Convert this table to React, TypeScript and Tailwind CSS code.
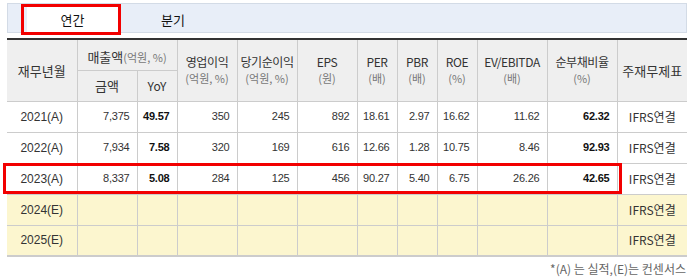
import React from "react";

const KR = "font-['Noto_Sans_CJK_KR','Noto_Sans',sans-serif]";
const NUM = "font-['Liberation_Sans','Noto_Sans_CJK_KR',sans-serif]";

type Row = {
  y: string;
  vals: string[];
  est?: boolean;
};

const rows: Row[] = [
  { y: "2021(A)", vals: ["7,375", "49.57", "350", "245", "892", "18.61", "2.97", "16.62", "11.62", "62.32"] },
  { y: "2022(A)", vals: ["7,934", "7.58", "320", "169", "616", "12.66", "1.28", "10.75", "8.46", "92.93"] },
  { y: "2023(A)", vals: ["8,337", "5.08", "284", "125", "456", "90.27", "5.40", "6.75", "26.26", "42.65"] },
  { y: "2024(E)", vals: ["", "", "", "", "", "", "", "", "", ""], est: true },
  { y: "2025(E)", vals: ["", "", "", "", "", "", "", "", "", ""], est: true },
];

const boldIdx = new Set([1, 9]);

function H2({ a, b }: { a: string; b: string }) {
  return (
    <div className="flex flex-col items-center whitespace-nowrap">
      <span className="block text-[12px] leading-[16px] tracking-[-0.4px] text-[#333]">{a}</span>
      <span className="block text-[11px] leading-[16px] text-[#777]">{b}</span>
    </div>
  );
}

export default function App() {
  const th = "border border-[#cccccc] bg-[#efefef] font-normal text-[#333] p-0 text-center align-middle whitespace-nowrap";
  return (
    <div className={`relative w-[688px] h-[280px] bg-white ${KR}`}>
      {/* tabs */}
      <div className="pt-[3px] pl-[7px]">
        <div className="w-[680px] h-[30px] bg-[#e8eef8] border border-[#d3dbe6] flex pl-[19px] pt-[3px]">
          <div className="w-[91px] h-[26px] bg-white flex items-center justify-center text-[13px] text-[#111]">연간</div>
          <div className="w-[110px] h-[26px] flex items-center justify-center text-[13px] text-[#111]">분기</div>
        </div>
      </div>

      {/* table */}
      <div className="pl-[7px] pt-[5px]">
        <table className="w-[680px] border-collapse table-fixed border-t-2 border-t-[#333] border-b-2 border-b-[#cccccc]">
          <colgroup>
            <col className="w-[70px]" />
            <col className="w-[60px]" />
            <col className="w-[40px]" />
            <col className="w-[60px]" />
            <col className="w-[60px]" />
            <col className="w-[60px]" />
            <col className="w-[40px]" />
            <col className="w-[40px]" />
            <col className="w-[40px]" />
            <col className="w-[70px]" />
            <col className="w-[70px]" />
            <col className="w-[70px]" />
          </colgroup>
          <thead>
            <tr className="h-[31px]">
              <th rowSpan={2} className={`${th} border-l-0 text-[13px]`}>재무년월</th>
              <th colSpan={2} className={th}>
                <span className="text-[13px]">매출액</span>
                <span className="text-[11px] text-[#777]">(억원, %)</span>
              </th>
              <th rowSpan={2} className={th}><H2 a="영업이익" b="(억원, %)" /></th>
              <th rowSpan={2} className={th}><H2 a="당기순이익" b="(억원, %)" /></th>
              <th rowSpan={2} className={th}><H2 a="EPS" b="(원)" /></th>
              <th rowSpan={2} className={th}><H2 a="PER" b="(배)" /></th>
              <th rowSpan={2} className={th}><H2 a="PBR" b="(배)" /></th>
              <th rowSpan={2} className={th}><H2 a="ROE" b="(%)" /></th>
              <th rowSpan={2} className={th}><H2 a="EV/EBITDA" b="(배)" /></th>
              <th rowSpan={2} className={th}><H2 a="순부채비율" b="(%)" /></th>
              <th rowSpan={2} className={`${th} border-r-0 text-[13px]`}>주재무제표</th>
            </tr>
            <tr className="h-[31px]">
              <th className={`${th} text-[13px]`}>금액</th>
              <th className={`${th} text-[12px]`}>YoY</th>
            </tr>
          </thead>
          <tbody>
            {rows.map((r) => (
              <tr key={r.y} className={`h-[31px] ${r.est ? "bg-[#fcf6cf]" : "bg-white"}`}>
                <td className={`border border-[#cccccc] border-l-0 text-center text-[12px] text-[#333] ${NUM}`}>{r.y}</td>
                {r.vals.map((v, i) => (
                  <td
                    key={i}
                    className={`border border-[#cccccc] text-right pr-[7px] text-[11px] tracking-[-0.2px] ${NUM} ${boldIdx.has(i) ? "font-bold text-[#111]" : "text-[#333]"}`}
                  >
                    {v}
                  </td>
                ))}
                <td className="border border-[#cccccc] border-r-0 text-center text-[12px] text-[#333]">IFRS연결</td>
              </tr>
            ))}
          </tbody>
        </table>
      </div>

      <div className="pr-[2px] pt-[4px] text-right text-[12px] leading-[16px] text-[#666]">*(A) 는 실적,(E)는 컨센서스</div>

      {/* red highlight overlays */}
      <div className="absolute left-[21px] top-[4px] w-[100px] h-[31px] border-[3px] border-[#f20000]" />
      <div className="absolute left-[3px] top-[163px] w-[619px] h-[31px] border-[3px] border-[#f20000]" />
    </div>
  );
}
